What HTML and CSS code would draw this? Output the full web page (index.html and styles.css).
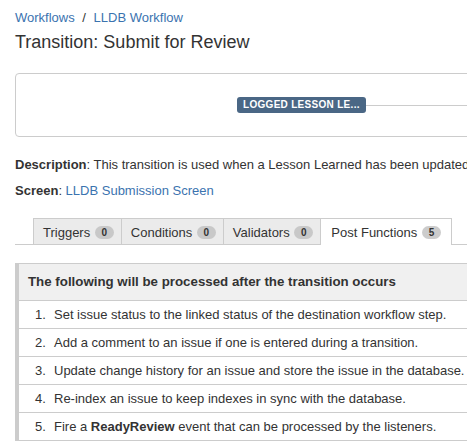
FILE: index.html
```html
<!DOCTYPE html>
<html lang="en">
<head>
    <meta charset="UTF-8">
    <title>Transition: Submit for Review</title>
    <link rel="stylesheet" href="styles.css">
</head>
<body>
    <div class="page">
        <div class="breadcrumbs">
            <a href="#">Workflows</a>
            <span class="sep">/</span>
            <a href="#">LLDB Workflow</a>
        </div>
        <h1 class="title">Transition: Submit for Review</h1>

        <div class="diagram">
            <span class="status">LOGGED LESSON LE...</span>
            <span class="link-line"></span>
        </div>

        <p class="meta"><strong>Description</strong>: This transition is used when a Lesson Learned has been updated and is ready to be submitted for review.</p>
        <p class="meta"><strong>Screen</strong>: <a href="#">LLDB Submission Screen</a></p>

        <ul class="tabs">
            <li class="tab">Triggers <span class="badge">0</span></li>
            <li class="tab">Conditions <span class="badge">0</span></li>
            <li class="tab">Validators <span class="badge">0</span></li>
            <li class="tab active">Post Functions <span class="badge">5</span></li>
        </ul>

        <div class="functions">
            <div class="functions-head">The following will be processed after the transition occurs</div>
            <ol class="function-list">
                <li>Set issue status to the linked status of the destination workflow step.</li>
                <li>Add a comment to an issue if one is entered during a transition.</li>
                <li>Update change history for an issue and store the issue in the database.</li>
                <li>Re-index an issue to keep indexes in sync with the database.</li>
                <li>Fire a <strong>ReadyReview</strong> event that can be processed by the listeners.</li>
            </ol>
        </div>
    </div>
</body>
</html>
```

FILE: styles.css
```css
html, body {
    margin: 0;
    padding: 0;
    background-color: #fff;
    overflow: hidden;
}
body {
    font-family: "Liberation Sans", Arial, sans-serif;
    font-size: 13px;
    color: #333;
}
a {
    color: #3b73af;
    text-decoration: none;
}
.page {
    width: 900px;
    padding: 10px 0 0 15px;
}
.breadcrumbs {
    line-height: 16px;
}
.breadcrumbs .sep {
    color: #333;
    margin: 0 4px;
}
.title {
    font-size: 18px;
    font-weight: normal;
    line-height: 24px;
    margin: 4px 0 0 0;
    color: #333;
}
.diagram {
    display: flex;
    align-items: center;
    height: 62px;
    margin-top: 19px;
    border: 1px solid #ccc;
    border-radius: 4px;
    padding-left: 221px;
}
.status {
    background-color: #4a6785;
    color: #fff;
    font-size: 10px;
    font-weight: bold;
    line-height: 16px;
    height: 16px;
    width: 129px;
    box-sizing: border-box;
    padding-left: 6px;
    border-radius: 3px;
    letter-spacing: 0.3px;
    white-space: nowrap;
    overflow: hidden;
}
.link-line {
    flex: 1;
    height: 1px;
    background-color: #ccc;
}
.meta {
    margin: 0;
    line-height: 20px;
}
.meta:first-of-type {
    margin-top: 18px;
}
.meta + .meta {
    margin-top: 6px;
}
.meta strong {
    font-weight: bold;
}
.tabs {
    list-style: none;
    display: flex;
    margin: 17px 0 0 0;
    padding: 0 0 0 18px;
    border-bottom: 1px solid #ccc;
    height: 26px;
}
.tab {
    height: 26px;
    box-sizing: border-box;
    padding: 4px 7px 0 9px;
    background-color: #ebebeb;
    border: 1px solid #ccc;
    border-left: none;
    border-bottom: none;
    white-space: nowrap;
    line-height: 20px;
}
.tab:first-child {
    border-left: 1px solid #ccc;
}
.tab.active {
    background-color: #fff;
    height: 27px;
    padding-left: 10px;
    padding-right: 10px;
}
.badge {
    display: inline-block;
    min-width: 19px;
    box-sizing: border-box;
    text-align: center;
    background-color: #c8c8c8;
    color: #333;
    font-size: 10px;
    font-weight: bold;
    line-height: 13px;
    padding: 0 5px;
    border-radius: 7px;
    margin-left: 1px;
    vertical-align: 1px;
}
.tab.active .badge {
    background-color: #ccc;
}
.functions {
    margin-top: 18px;
    border-top: 1px solid #ccc;
    border-left: 4px solid #ccc;
}
.functions-head {
    background-color: #f0f0f0;
    font-size: 13.3px;
    font-weight: bold;
    line-height: 36px;
    padding-left: 9px;
    border-bottom: 1px solid #ccc;
}
.function-list {
    margin: 0;
    padding: 0;
    list-style: none;
    counter-reset: step;
    font-size: 13px;
}
.function-list li {
    counter-increment: step;
    line-height: 27px;
    border-bottom: 1px solid #ccc;
    padding-left: 35px;
    position: relative;
}
.function-list li::before {
    content: counter(step) ".";
    position: absolute;
    left: 16px;
}
```
